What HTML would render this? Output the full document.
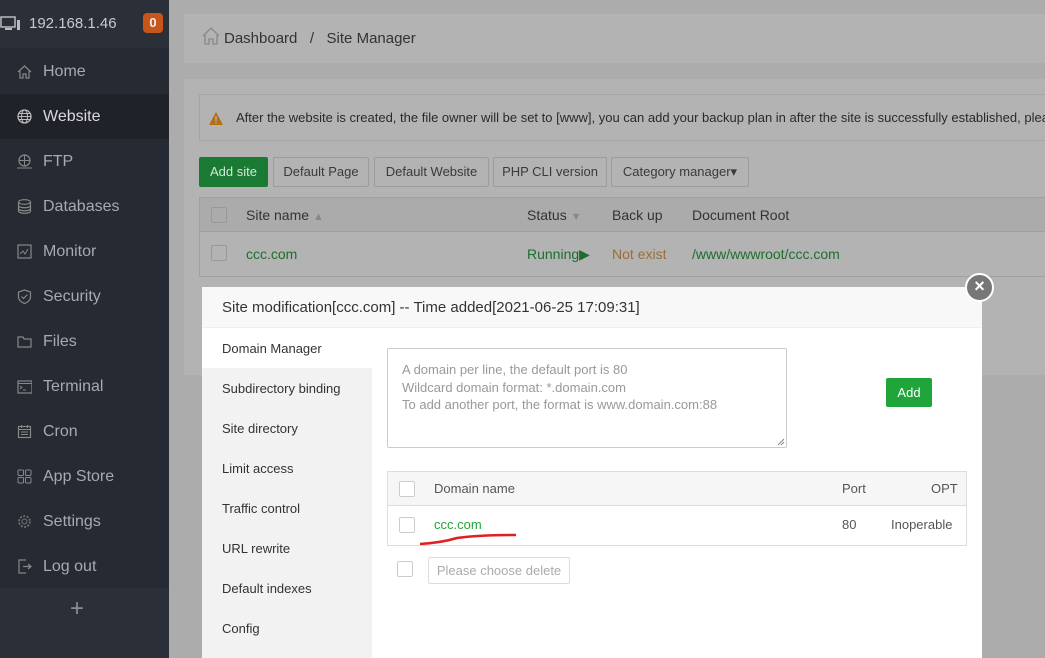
<!DOCTYPE html>
<html><head><meta charset="utf-8"><style>
*{box-sizing:border-box;margin:0;padding:0}
body{width:1045px;height:658px;overflow:hidden;background:#acacac;font-family:"Liberation Sans",sans-serif;position:relative}
.side{position:absolute;left:0;top:0;width:169px;height:658px;background:#252a33}
.top{height:48px;background:#2b2f38;color:#c8cace;font-size:15px;position:relative}
.top .ip{position:absolute;left:29px;top:15px}
.top .badge{position:absolute;left:143px;top:13px;width:20px;height:20px;border-radius:4px;background:#c8561a;color:#eee;font-size:13px;font-weight:bold;text-align:center;line-height:20px}
.item{height:45px;line-height:45px;color:#a7aab0;font-size:16px;padding-left:43px;position:relative}
.item svg{position:absolute;left:17px;top:15px}
.item.act{background:#1f2228;color:#d8dadd}
.plus{position:absolute;left:0;top:588px;width:154px;height:70px;background:#2b2f38;color:#8a8d93;font-size:24px;text-align:center;line-height:42px}
.plusbg{position:absolute;left:0;top:588px;width:169px;height:70px;background:#2b2f38}
.panel{position:absolute;background:#b3b3b3}
.btn{position:absolute;top:157px;height:30px;border:1px solid #9c9c9c;border-radius:2px;font-size:13px;color:#3a3a3a;line-height:28px;text-align:center;background:#b3b3b3}
.cb{position:absolute;width:16px;height:16px;border:1px solid #999;border-radius:2px}
.modal{position:absolute;left:202px;top:287px;width:780px;height:371px;background:#fff}
.mh{height:41px;background:#f8f8f8;border-bottom:1px solid #eee;font-size:15px;color:#333;padding:12px 0 0 20px}
.ml{position:absolute;left:0;top:41px;width:170px;height:330px;background:#f2f2f2}
.ml div{height:40px;line-height:42px;padding-left:20px;font-size:13px;color:#333}
.ml div.a{background:#fff}
</style></head><body>
<div class="side">
 <div class="top"><svg style="position:absolute;left:0;top:16px" width="22" height="16"><rect x="1" y="1" width="14" height="10" fill="none" stroke="#bbb" stroke-width="1.5"/><rect x="5" y="12" width="7" height="2" fill="#bbb"/><rect x="17" y="4" width="3" height="10" fill="#bbb"/></svg><span class="ip">192.168.1.46</span><span class="badge">0</span></div>
 <div style="height:1px"></div>
 <div class="item"><svg width="15" height="15"><path d="M1 8L7.5 2L14 8M3 7v7h3v-4h3v4h3V7" fill="none" stroke="#888" stroke-width="1.2"/></svg>Home</div>
 <div class="item act"><svg width="15" height="15"><circle cx="7.5" cy="7.5" r="6.5" fill="none" stroke="#bbb" stroke-width="1.3"/><ellipse cx="7.5" cy="7.5" rx="3" ry="6.5" fill="none" stroke="#bbb"/><path d="M1 7.5h13M2 4.5h11M2 10.5h11" stroke="#bbb"/></svg>Website</div>
 <div class="item"><svg width="15" height="15"><circle cx="7.5" cy="6.5" r="5.5" fill="none" stroke="#888" stroke-width="1.2"/><path d="M2 6.5h11M7.5 1v11M0 14h15" stroke="#888"/></svg>FTP</div>
 <div class="item"><svg width="15" height="15"><ellipse cx="7.5" cy="3" rx="6" ry="2.3" fill="none" stroke="#888" stroke-width="1.2"/><path d="M1.5 3v9c0 3 12 3 12 0V3M1.5 6.5c0 3 12 3 12 0M1.5 9.5c0 3 12 3 12 0" fill="none" stroke="#888" stroke-width="1.2"/></svg>Databases</div>
 <div class="item"><svg width="15" height="15"><rect x="1" y="1" width="13" height="13" fill="none" stroke="#888" stroke-width="1.2"/><path d="M3 10l3-3 2 3 3-5" fill="none" stroke="#888"/></svg>Monitor</div>
 <div class="item"><svg width="15" height="15"><path d="M7.5 1L13.5 3v5c0 3-3 5.5-6 6.5C4.5 13.5 1.5 11 1.5 8V3z" fill="none" stroke="#888" stroke-width="1.2"/><path d="M4.5 7.5l2 2 4-4" fill="none" stroke="#888" stroke-width="1.2"/></svg>Security</div>
 <div class="item"><svg width="15" height="15"><path d="M1 3h5l1 2h7v8H1z" fill="none" stroke="#888" stroke-width="1.2"/></svg>Files</div>
 <div class="item"><svg width="15" height="15"><rect x="1" y="2" width="14" height="12" fill="none" stroke="#888" stroke-width="1.2"/><path d="M1 4.5h14M3 7l2 1.5-2 1.5M6 11h3" fill="none" stroke="#888"/></svg>Terminal</div>
 <div class="item"><svg width="15" height="15"><rect x="1.5" y="2.5" width="12" height="11" fill="none" stroke="#888" stroke-width="1.2"/><path d="M1.5 5.5h12M4 8h7M4 10.5h7M4.5 1v3M10.5 1v3" stroke="#888"/></svg>Cron</div>
 <div class="item"><svg width="15" height="15"><rect x="1" y="1" width="5.5" height="5.5" rx="1" fill="none" stroke="#888"/><rect x="8.5" y="1" width="5.5" height="5.5" rx="1" fill="none" stroke="#888"/><rect x="1" y="8.5" width="5.5" height="5.5" rx="1" fill="none" stroke="#888"/><rect x="8.5" y="8.5" width="5.5" height="5.5" rx="1" fill="none" stroke="#888"/></svg>App Store</div>
 <div class="item"><svg width="15" height="15"><circle cx="7.5" cy="7.5" r="2.5" fill="none" stroke="#777"/><circle cx="7.5" cy="7.5" r="5.5" fill="none" stroke="#777" stroke-dasharray="2 1.5" stroke-width="1.6"/></svg>Settings</div>
 <div class="item"><svg width="15" height="15"><path d="M9 1H2v13h7M6 7.5h8M11 5l3 2.5-3 2.5" fill="none" stroke="#888" stroke-width="1.2"/></svg>Log out</div>
 <div class="plusbg"></div><div class="plus">+</div>
</div>

<div class="panel" style="left:184px;top:14px;width:861px;height:49px;font-size:15px;color:#333">
 <svg style="position:absolute;left:18px;top:13px" width="18" height="18"><path d="M1 9L9 1l8 8M3 8v9h4v-5h4v5h4V8" fill="none" stroke="#888" stroke-width="1.3"/></svg>
 <span style="position:absolute;left:40px;top:16px">Dashboard &nbsp;&nbsp;/ &nbsp;&nbsp;Site Manager</span>
</div>
<div class="panel" style="left:184px;top:79px;width:861px;height:296px">
 <div style="position:absolute;left:15px;top:15px;width:846px;height:47px;border:1px solid #a5a5a5;border-right:none;font-size:13px;color:#2a2a2a;padding:15px 0 0 36px;white-space:nowrap;overflow:hidden">After the website is created, the file owner will be set to [www], you can add your backup plan in after the site is successfully established, please</div>
 <svg style="position:absolute;left:25px;top:33px" width="14" height="13"><path d="M7 0L14 13H0z" fill="#b66f0e"/><rect x="6.3" y="4" width="1.4" height="5" fill="#b3b3b3"/><rect x="6.3" y="10" width="1.4" height="1.4" fill="#b3b3b3"/></svg>
</div>
<div class="btn" style="left:199px;width:69px;background:#1a7a33;border-color:#1a7a33;color:#d5e6d8">Add site</div>
<div class="btn" style="left:273px;width:96px">Default Page</div>
<div class="btn" style="left:374px;width:115px">Default Website</div>
<div class="btn" style="left:493px;width:114px">PHP CLI version</div>
<div class="btn" style="left:611px;width:138px">Category manager▾</div>
<div style="position:absolute;left:199px;top:197px;width:846px;height:35px;background:#ababab;border:1px solid #a0a0a0;border-right:none;font-size:14px;color:#333">
 <div class="cb" style="left:11px;top:9px"></div>
 <span style="position:absolute;left:46px;top:9px">Site name <span style="color:#888;font-size:11px">▲</span></span>
 <span style="position:absolute;left:327px;top:9px">Status <span style="color:#888;font-size:11px">▼</span></span>
 <span style="position:absolute;left:412px;top:9px">Back up</span>
 <span style="position:absolute;left:492px;top:9px">Document Root</span>
</div>
<div style="position:absolute;left:199px;top:232px;width:846px;height:45px;border:1px solid #a0a0a0;border-top:none;border-right:none;font-size:14px">
 <div class="cb" style="left:11px;top:13px"></div>
 <span style="position:absolute;left:46px;top:14px;color:#1d6e2e">ccc.com</span>
 <span style="position:absolute;left:327px;top:14px;color:#1d6e2e">Running▶</span>
 <span style="position:absolute;left:412px;top:14px;color:#9a6f35">Not exist</span>
 <span style="position:absolute;left:492px;top:14px;color:#1d6e2e">/www/wwwroot/ccc.com</span>
</div>

<div class="modal">
 <div class="mh">Site modification[ccc.com] -- Time added[2021-06-25 17:09:31]</div>
 <div class="ml"><div class="a">Domain Manager</div><div>Subdirectory binding</div><div>Site directory</div><div>Limit access</div><div>Traffic control</div><div>URL rewrite</div><div>Default indexes</div><div>Config</div></div>
 <div style="position:absolute;left:185px;top:61px;width:400px;height:100px;border:1px solid #ccc;border-radius:2px;padding:12px 0 0 14px;font-size:13px;line-height:17.5px;color:#999">A domain per line, the default port is 80<br>Wildcard domain format: *.domain.com<br>To add another port, the format is www.domain.com:88
  <svg style="position:absolute;right:1px;bottom:1px" width="8" height="8"><path d="M7 1L1 7M7 4L4 7" stroke="#888"/></svg></div>
 <div style="position:absolute;left:684px;top:91px;width:46px;height:29px;background:#20a53a;border-radius:2px;color:#fff;font-size:13px;text-align:center;line-height:29px">Add</div>
 <div style="position:absolute;left:185px;top:184px;width:580px;height:35px;background:#f6f6f6;border:1px solid #ddd;font-size:13px;color:#555">
  <div class="cb" style="left:11px;top:9px;border-color:#ccc;background:#fff"></div>
  <span style="position:absolute;left:46px;top:9px">Domain name</span>
  <span style="position:absolute;left:454px;top:9px">Port</span>
  <span style="position:absolute;left:543px;top:9px">OPT</span>
 </div>
 <div style="position:absolute;left:185px;top:219px;width:580px;height:40px;border:1px solid #ddd;border-top:none;font-size:13px;color:#555">
  <div class="cb" style="left:11px;top:11px;border-color:#ccc"></div>
  <span style="position:absolute;left:46px;top:11px;color:#20a53a">ccc.com</span>
  <span style="position:absolute;left:454px;top:11px">80</span>
  <span style="position:absolute;left:503px;top:11px">Inoperable</span>
 </div>
 <svg style="position:absolute;left:215px;top:244px" width="100" height="16"><path d="M3 13C20 12 30 10 40 7C55 5 70 4 99 4" fill="none" stroke="#e02020" stroke-width="2.5"/></svg>
 <div class="cb" style="left:195px;top:274px;border-color:#ccc"></div>
 <div style="position:absolute;left:226px;top:270px;width:142px;height:27px;border:1px solid #ddd;border-radius:2px;font-size:13px;color:#aaa;line-height:25px;text-align:center">Please choose delete</div>
</div>
<div style="position:absolute;left:965px;top:273px;width:29px;height:29px;border-radius:50%;background:#777;border:2.5px solid #fff;color:#fff;font-size:18px;text-align:center;line-height:23px;font-weight:bold">×</div>
</body></html>
